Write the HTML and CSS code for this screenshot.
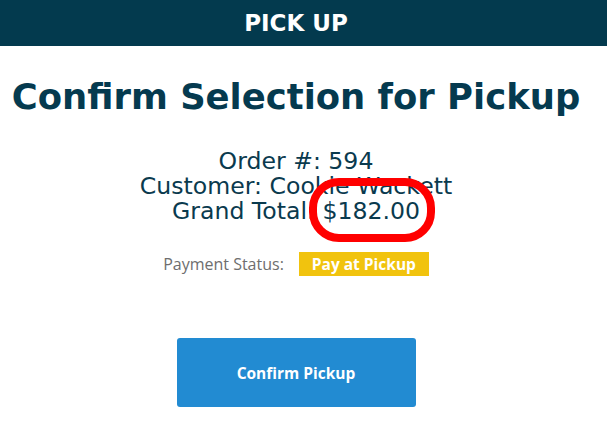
FILE: index.html
```html
<!DOCTYPE html>
<html>
<head>
<meta charset="utf-8">
<link rel="stylesheet" href="styles.css">
</head>
<body>
<div class="page">
  <header class="topbar">PICK UP</header>
  <main class="content">
    <h1 class="title">Confirm Selection for Pickup</h1>
    <div class="details">
      <div class="line">Order #: 594</div>
      <div class="line">Customer: Cookie Wackett</div>
      <div class="line">Grand Total: <span class="amount">$182.00<span class="mark"></span></span></div>
    </div>
    <div class="payment">
      <span class="label">Payment Status:</span>
      <span class="badge">Pay at Pickup</span>
    </div>
    <button class="confirm">Confirm Pickup</button>
  </main>
</div>
</body>
</html>
```
FILE: styles.css
```css
html, body { margin: 0; padding: 0; background: #fff; }
body { width: 607px; height: 434px; overflow: hidden; }
.page { width: 592px; }
.topbar {
  height: 46px;
  width: 607px;
  box-sizing: border-box;
  padding-right: 15px;
  background: #033a4e;
  color: #fff;
  font-family: "DejaVu Sans", sans-serif;
  font-weight: bold;
  font-size: 23px;
  display: flex;
  align-items: center;
  justify-content: center;
}
.content {
  display: flex;
  flex-direction: column;
  align-items: center;
}
.title {
  margin: 28px 0 0 0;
  font-family: "DejaVu Sans", sans-serif;
  font-weight: bold;
  font-size: 35.4px;
  line-height: 46px;
  color: #053a4f;
  white-space: nowrap;
}
.details {
  margin-top: 29px;
  text-align: center;
  font-family: "DejaVu Sans", sans-serif;
  font-size: 23.6px;
  line-height: 25px;
  color: #0a3a4e;
}
.amount { position: relative; }
.mark {
  position: absolute;
  left: -13px;
  right: -15px;
  top: -19px;
  bottom: -17px;
  border: 8px solid #ff0000;
  border-radius: 30px;
}
.payment {
  margin-top: 28px;
  display: flex;
  align-items: center;
  gap: 15px;
  font-family: "Open Sans", sans-serif;
}
.label { font-size: 16px; color: #6e6e6e; }
.badge {
  background: #f1c30e;
  color: #fff;
  font-weight: bold;
  font-size: 15.5px;
  height: 24px;
  line-height: 24px;
  width: 130px;
  text-align: center;
}
.confirm {
  margin-top: 62px;
  width: 239px;
  height: 69px;
  border: none;
  border-radius: 3px;
  background: #228bd2;
  color: #fff;
  font-family: "Open Sans", sans-serif;
  font-weight: bold;
  font-size: 15.5px;
}
```
